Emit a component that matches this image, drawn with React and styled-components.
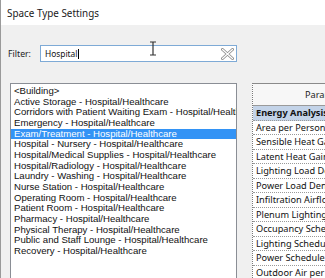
import React from "react";
import styled, { createGlobalStyle } from "styled-components";

const Global = createGlobalStyle`
  html, body { margin: 0; padding: 0; overflow: hidden; }
  body { background: #f0f0f0; font-family: "Noto Sans", sans-serif; }
`;

const Window = styled.div`
  width: 325px;
  height: 278px;
  overflow: hidden;
  background: #f0f0f0;
  border-left: 1px solid #9a9a9a;
  box-sizing: border-box;
  display: flex;
  flex-direction: column;
`;

const TitleBar = styled.div`
  height: 25px;
  flex: none;
  background: #ffffff;
  display: flex;
  align-items: center;
  padding-left: 6px;
  font-size: 9.9px;
  color: #1a1a1a;
`;

const FilterRow = styled.div`
  display: flex;
  align-items: center;
  margin-top: 20px;
  padding-left: 7px;
  height: 17px;
  flex: none;
`;

const Label = styled.span`
  font-size: 8.7px;
  color: #222;
  width: 32px;
`;

const InputBox = styled.div`
  position: relative;
  width: 197px;
  height: 17px;
  box-sizing: border-box;
  border: 1px solid #7eaad6;
  background: #fff;
  display: flex;
  align-items: center;
  padding-left: 4px;
  font-size: 8.4px;
  color: #111;
`;

const Caret = styled.span`
  display: inline-block;
  width: 1px;
  height: 10px;
  background: #000;
  margin-left: 0.5px;
`;

const ClearIcon = styled.svg`
  position: absolute;
  right: 2px;
  top: 2px;
`;

const IBeam = styled.svg`
  position: absolute;
  left: 108px;
  top: -5px;
`;

const Body = styled.div`
  display: flex;
  margin-top: 21px;
  padding-left: 9px;
  gap: 15px;
  flex: 1;
  min-height: 0;
`;

const ListBox = styled.div`
  width: 227px;
  flex: none;
  box-sizing: border-box;
  border: 1px solid #8a8e95;
  border-bottom: none;
  background: #fff;
  padding: 2px 0 0 0;
  height: 200px;
`;

const ListItem = styled.div`
  height: 10.67px;
  line-height: 10.67px;
  padding-left: 3px;
  font-family: "Liberation Sans", Arial, sans-serif;
  font-size: 9.6px;
  white-space: nowrap;
  overflow: hidden;
  color: ${(p) => (p.$selected ? "#ffffff" : "#111")};
  background: ${(p) => (p.$selected ? "#3393f5" : "transparent")};
`;

const Grid = styled.div`
  flex: 1;
  border-left: 1px dotted #7a7a7a;
  border-top: 1px solid #8a8a8a;
  background: #fff;
  min-width: 120px;
`;

const GridHeader = styled.div`
  height: 21px;
  line-height: 21px;
  background: #f7f7f7;
  border-bottom: 1px solid #9a9a9a;
  padding-left: 52px;
  font-size: 9.2px;
  color: #222;
  white-space: nowrap;
`;

const GridRow = styled.div`
  height: 14.5px;
  line-height: 14px;
  box-sizing: border-box;
  border-bottom: 1px dotted #9a9a9a;
  padding-left: 3px;
  font-size: 9.2px;
  white-space: nowrap;
  overflow: hidden;
  color: #111;
  font-weight: ${(p) => (p.$group ? 700 : 400)};
  background: ${(p) => (p.$group ? "#c3d3e8" : "#fff")};
`;

const items = [
  "<Building>",
  "Active Storage - Hospital/Healthcare",
  "Corridors with Patient Waiting Exam - Hospital/Healthcare",
  "Emergency - Hospital/Healthcare",
  "Exam/Treatment - Hospital/Healthcare",
  "Hospital - Nursery - Hospital/Healthcare",
  "Hospital/Medical Supplies - Hospital/Healthcare",
  "Hospital/Radiology - Hospital/Healthcare",
  "Laundry - Washing - Hospital/Healthcare",
  "Nurse Station - Hospital/Healthcare",
  "Operating Room - Hospital/Healthcare",
  "Patient Room - Hospital/Healthcare",
  "Pharmacy - Hospital/Healthcare",
  "Physical Therapy - Hospital/Healthcare",
  "Public and Staff Lounge - Hospital/Healthcare",
  "Recovery - Hospital/Healthcare",
];

const params = [
  { name: "Energy Analysis", group: true },
  { name: "Area per Person" },
  { name: "Sensible Heat Gain per Person" },
  { name: "Latent Heat Gain per Person" },
  { name: "Lighting Load Density" },
  { name: "Power Load Density" },
  { name: "Infiltration Airflow per area" },
  { name: "Plenum Lighting Contribution" },
  { name: "Occupancy Schedule" },
  { name: "Lighting Schedule" },
  { name: "Power Schedule" },
  { name: "Outdoor Air per Person" },
];

export default function App() {
  return (
    <Window>
      <Global />
      <TitleBar>Space Type Settings</TitleBar>
      <FilterRow>
        <Label>Filter:</Label>
        <InputBox>
          Hospital
          <Caret />
          <IBeam width="8" height="15" viewBox="0 0 8 15">
            <path d="M1 1h6M4 1v13M1 14h6" stroke="#333" strokeWidth="1.2" fill="none" />
          </IBeam>
          <ClearIcon width="13" height="12" viewBox="0 0 13 12">
            <path
              d="M1.5 1.5L11.5 10.5M11.5 1.5L1.5 10.5"
              stroke="#8c8c8c"
              strokeWidth="3"
              strokeLinecap="round"
              fill="none"
            />
            <path
              d="M1.5 1.5L11.5 10.5M11.5 1.5L1.5 10.5"
              stroke="#ffffff"
              strokeWidth="1.2"
              strokeLinecap="round"
              fill="none"
            />
          </ClearIcon>
        </InputBox>
      </FilterRow>
      <Body>
        <ListBox>
          {items.map((t, i) => (
            <ListItem key={t} $selected={i === 4}>
              {t}
            </ListItem>
          ))}
        </ListBox>
        <Grid>
          <GridHeader>Parameter</GridHeader>
          {params.map((p) => (
            <GridRow key={p.name} $group={p.group}>
              {p.name}
            </GridRow>
          ))}
        </Grid>
      </Body>
    </Window>
  );
}
